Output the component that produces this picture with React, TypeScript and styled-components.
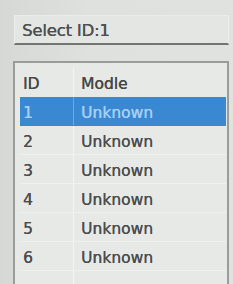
import React from "react";
import styled, { createGlobalStyle } from "styled-components";

const Global = createGlobalStyle`
  html, body { margin: 0; padding: 0; background: #d9dbd9; overflow: hidden; }
  body { font-family: "DejaVu Sans", "Liberation Sans", sans-serif; }
`;

const Page = styled.div`
  width: 233px;
  height: 284px;
  box-sizing: border-box;
  padding: 15px 4px 0 13px;
  display: flex;
  flex-direction: column;
  gap: 16px;
  background: linear-gradient(90deg, #d6d8d6 0%, #dfe1df 40%, #e0e2e0 100%);
`;

const SelectBox = styled.div`
  margin-left: 1px;
  height: 30px;
  box-sizing: border-box;
  display: flex;
  align-items: center;
  padding: 1px 0 0 7px;
  background: #e4e6e4;
  border-top: 1px solid #eaecea;
  border-left: 1px solid #eceeec;
  border-right: 1px solid #eceeec;
  border-bottom: 2px solid #737573;
  color: #4e5050;
  font-size: 16.5px;
  letter-spacing: -0.2px;
  text-shadow: 0.35px 0 0 #4e5050;
`;

const Table = styled.div`
  flex: 1;
  box-sizing: border-box;
  border: 2px solid #9a9c9a;
  border-bottom: none;
  background: #e7e9e7;
  padding: 5px 1px 0 5px;
  display: flex;
  flex-direction: column;
`;

const Row = styled.div<{ $selected?: boolean; $header?: boolean }>`
  display: grid;
  grid-template-columns: 53px 1fr;
  height: 29px;
  box-sizing: border-box;
  background: ${(p) => (p.$selected ? "#3b88d2" : "transparent")};
  color: ${(p) => (p.$selected ? "#a6d0f4" : p.$header ? "#454747" : "#4b4d4d")};
  text-shadow: 0.3px 0 0 ${(p) => (p.$selected ? "#a6d0f4" : "#4b4d4d")};
  border-bottom: 1px solid
    ${(p) => (p.$selected ? "#3b88d2" : p.$header ? "transparent" : "rgba(255,255,255,0.35)")};
  font-size: 15.5px;
`;

const Cell = styled.div<{ $second?: boolean; $selected?: boolean }>`
  display: flex;
  align-items: center;
  padding-top: 3px;
  padding-left: ${(p) => (p.$second ? "7px" : "3px")};
  border-left: ${(p) =>
    p.$second
      ? p.$selected
        ? "1px solid #6ea8e0"
        : "1px solid rgba(255,255,255,0.55)"
      : "none"};
  white-space: nowrap;
`;

const Filler = styled.div`
  flex: 1;
  display: grid;
  grid-template-columns: 53px 1fr;
`;

const FillerCol = styled.div<{ $second?: boolean }>`
  border-left: ${(p) => (p.$second ? "1px solid rgba(255,255,255,0.55)" : "none")};
`;

const rows = [1, 2, 3, 4, 5, 6];

export default function App() {
  return (
    <>
      <Global />
      <Page>
        <SelectBox>Select ID:1</SelectBox>
        <Table>
          <Row $header>
            <Cell>ID</Cell>
            <Cell $second>Modle</Cell>
          </Row>
          {rows.map((id) => (
            <Row key={id} $selected={id === 1}>
              <Cell>{id}</Cell>
              <Cell $second $selected={id === 1}>
                Unknown
              </Cell>
            </Row>
          ))}
          <Filler>
            <FillerCol />
            <FillerCol $second />
          </Filler>
        </Table>
      </Page>
    </>
  );
}
